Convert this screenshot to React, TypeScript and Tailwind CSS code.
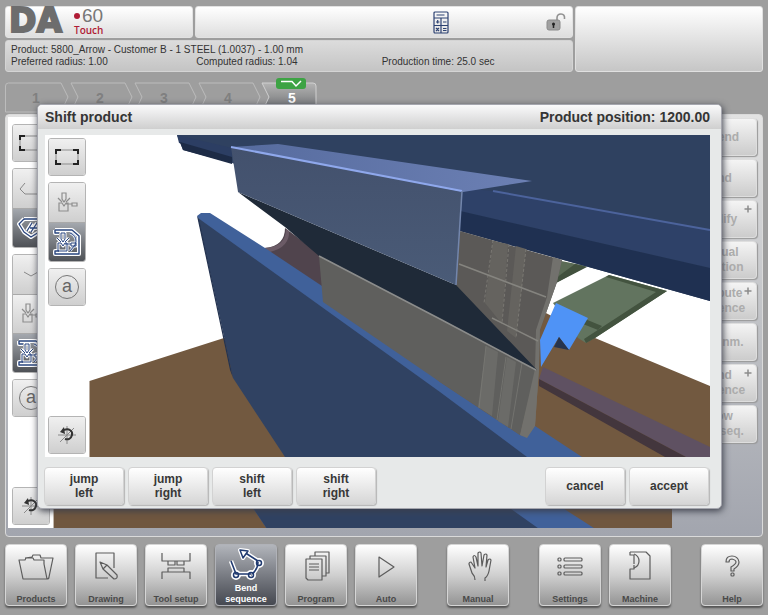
import type { ReactNode } from "react";

const toolLight = "bg-linear-to-b from-[#f0f0f0] to-[#cfcfcf]";
const toolDark = "bg-linear-to-b from-[#a4a8ae] to-[#4f5257]";

type Tool = { label: string; icon: ReactNode; active?: boolean };

function ToolGroup({ tools }: { tools: Tool[] }) {
  return (
    <div className="overflow-hidden rounded-[3px] border border-[#b4b4b4]">
      {tools.map((t, i) => (
        <button
          key={t.label}
          type="button"
          aria-label={t.label}
          aria-pressed={t.active}
          className={`flex w-9 items-center justify-center ${tools.length > 1 ? "h-[39px]" : "h-9"} ${t.active ? toolDark : toolLight} ${i > 0 ? "border-t border-[#a9a9a9]" : ""}`}
        >
          {t.icon}
        </button>
      ))}
    </div>
  );
}

function FrameIcon() {
  return (
    <svg width="26" height="20" viewBox="0 0 26 20" fill="none">
      <path d="M2 5v10M24 5v10M6 3h14M6 17h14" stroke="#8b8b8b" />
      <path d="M2 7V3h5M19 3h5v4M24 13v4h-5M7 17H2v-4" stroke="#222" strokeWidth="2" />
    </svg>
  );
}

const benderPath = "M5 2h4v6l-2 3-2-3zM1 7l4 4M13 7l-4 4M2 12h3l2 3 2-3h2v8H2zM9 13h6M15 12h5v3h-5z";

function BenderIcon() {
  return (
    <svg width="24" height="24" viewBox="0 0 24 24" fill="none" stroke="#8e8e8e" strokeWidth="1.200">
      <path d="M7 2h4v6l-2 3-2-3zM3 7l4 4M15 7l-4 4M4 12h3l2 3 2-3h2v8H4zM11 13h6M17 12h5v3h-5z" />
    </svg>
  );
}

function MachineSideIcon() {
  return (
    <svg width="28" height="28" viewBox="0 0 28 28" fill="none" strokeLinejoin="round">
      <path d="M2 2h17l7 6v18H2v-3h4M2 2v3h4" stroke="#fff" strokeWidth="4" />
      <g transform="translate(3 3)">
        <path d={benderPath} stroke="#fff" strokeWidth="3" />
      </g>
      <path d="M2 2h17l7 6v18H2v-3h4M2 2v3h4" stroke="#29457f" strokeWidth="1.400" />
      <path d="M17 5c6 2 7 8 5 12l-5 6" stroke="#dfe6f5" strokeWidth="2.600" />
      <path d="M17 5c6 2 7 8 5 12l-5 6" stroke="#29457f" />
      <g transform="translate(3 3)">
        <path d={benderPath} stroke="#29457f" />
      </g>
    </svg>
  );
}

function AutoIcon() {
  return (
    <span className="flex h-6 w-6 items-center justify-center rounded-full border border-[#777] pb-0.5 text-lg leading-5 text-[#666]">
      a
    </span>
  );
}

function RotateIcon() {
  return (
    <svg width="22" height="22" viewBox="0 0 22 22" fill="none">
      <path d="M2 11h18M11 2v18M4 18L18 4" stroke="#8a8a8a" />
      <path d="M8 6c5-2 9 1 8 5-1 4-4 5-7 4" stroke="#333" strokeWidth="2" />
      <path d="M8 3L4 8l5 2z" fill="#333" />
    </svg>
  );
}

function BackIcon() {
  return (
    <svg width="26" height="20" viewBox="0 0 26 20" fill="none" stroke="#888">
      <path d="M7 4L2 10l5 5h18" />
    </svg>
  );
}

function BendSideIcon() {
  return (
    <svg width="28" height="24" viewBox="0 0 28 24" fill="none" strokeLinejoin="round">
      <path d="M7 3L2 8l5 8 7 5 8-5M7 3h16M15 7l-5 8M20 7l-6 9M13 12h10" stroke="#fff" strokeWidth="4" />
      <path d="M7 3L2 8l5 8 7 5 8-5M7 3h16M15 7l-5 8M20 7l-6 9M13 12h10" stroke="#29457f" strokeWidth="1.300" />
    </svg>
  );
}

function DownIcon() {
  return (
    <svg width="16" height="10" viewBox="0 0 16 10" fill="none" stroke="#888">
      <path d="M1 2l7 4 7-4" />
    </svg>
  );
}

function Scene() {
  return (
    <svg
      className="absolute inset-0 h-full w-full"
      viewBox="45 135 665 322"
      preserveAspectRatio="xMidYMid slice"
      role="img"
      aria-label="Press brake with product"
    >
      <defs>
        <linearGradient id="sheet" x1="0" x2="1" y1="0" y2="0">
          <stop offset="0" stopColor="#566b9e" />
          <stop offset="1" stopColor="#6c80b4" />
        </linearGradient>
        <linearGradient id="front" x1="0" x2="0" y1="0" y2="1">
          <stop offset="0" stopColor="#43516d" />
          <stop offset="1" stopColor="#4a5b77" />
        </linearGradient>
      </defs>
      <rect x="45" y="135" width="665" height="322" fill="#fff" />
      <path d="M89.500 381L224 338L400 330L540 310L595 338L710 386V457H89.500z" fill="#725940" />
      <path d="M543 367L710 447V457H686L539 379z" fill="#5f5162" />
      <path d="M539 379L686 457H665L539 386z" fill="#43363d" />
      <path d="M556 260L587 266L556 283z" fill="#5b6b56" />
      <path d="M575 264L587 267L556 283V278z" fill="#42513e" />
      <path d="M553 303L609 275L667 291L595 338L586 343L578 338z" fill="#62745f" />
      <path d="M609 275L667 291L595 338L586 343L584 339L656 292L606 277z" fill="#43533f" />
      <path d="M585 319L602 326L598 330L583 324z" fill="#43533f" />
      <path d="M285 228L322 256V296L265 250V248Q285 246 285 228z" fill="#50444d" />
      <path d="M286 229Q286 247 264 248L270 252Q290 247 289 231z" fill="#6b5b66" />
      <path d="M177 135H710V301L460 231L232 163L183 150z" fill="#2f4160" />
      <path d="M177 135L232 148V158L179 143z" fill="#2c3e63" />
      <path d="M180 142L232 157V164L183 150z" fill="#1d2b46" />
      <path d="M493 191L710 230V268L460 211V188z" fill="#2e4168" />
      <path d="M460 211L710 268V301L460 231z" fill="#1f3051" />
      <path d="M493 191L710 230" stroke="#4c639c" strokeWidth="2" />
      <path d="M460 231L562 260L557 282L540 330L539 368L536 371L450 280z" fill="#5b5957" />
      <path d="M553 257L562 260L557 282L540 330L539 368L535 426L527 438L520 435L535 369L536 330L547 297z" fill="#72716d" />
      <path d="M197 216L201 213H210L265 248L322 286L440 382L520 435L527 437L535 426L582 457H520L380 375L230 270z" fill="#40619a" />
      <path d="M319 256L440 319L536 370L520 435L440 382L323 302z" fill="#5f5f5d" />
      <path d="M535 369L520 435L527 438L535 426L539 368z" fill="#72716d" />
      <path d="M486 346L498 352L492 416L478 407zM507 357L516 362L508 427L498 421z" fill="#6b6b68" />
      <path d="M493 241L508 244L502 324L485 303zM516 246L526 249L516 338L507 331z" fill="#65635f" />
      <path d="M493 240L484 303M509 244L502 324M526 249L516 338" stroke="#8d8b84" strokeDasharray="3 2" opacity=".6" />
      <path d="M486 346L479 408M506 357L497 420M522 363L511 429" stroke="#7c7c77" opacity=".7" />
      <path d="M459 264L546 297M492 318L538 341" fill="none" stroke="#85847f" strokeWidth="1.500" />
      <path d="M198 218L440 392L527 457H285L233 378z" fill="#304262" />
      <path d="M197 216L199 219L233 378L230 370z" fill="#243350" />
      <path d="M238 192L456 285L537 370L440 319L319 256L285 227z" fill="#1f2a38" />
      <path d="M319 256L440 319L536 370" fill="none" stroke="#8b8c8b" strokeWidth="1.500" />
      <path d="M231 147L278 144L532 181L463 192z" fill="url(#sheet)" />
      <path d="M231 147L462 192L456 285L238 192z" fill="url(#front)" />
      <path d="M231 147L462 191" stroke="#8fa8ec" strokeWidth="2" />
      <path d="M462 191L456 285" stroke="#7386ac" strokeWidth="1.500" />
      <path d="M556 303L588 318L569 350L559 337L541 367L540 340z" fill="#4f93f6" />
      <path d="M559 337L569 350L554 347z" fill="#26344e" />
    </svg>
  );
}

function BackScene() {
  return (
    <svg
      className="absolute inset-0 h-full w-full"
      viewBox="8 117 663 411"
      preserveAspectRatio="xMidYMax slice"
      aria-hidden="true"
    >
      <rect x="8" y="117" width="663" height="411" fill="#fff" />
      <path d="M53.500 440L200 390L671 420V528H53.500z" fill="#70573f" />
      <path d="M160 250L593 528H266L200 430z" fill="#40619a" />
      <path d="M160 260L537 528H266L200 430z" fill="#304262" />
    </svg>
  );
}

function Steps() {
  return (
    <ol className="relative flex h-8 w-[312px] text-center text-sm font-bold text-[#808080]">
      <svg className="absolute inset-0" width="312" height="32" viewBox="0 0 312 32" fill="none" stroke="#bcbcbc" aria-hidden="true">
        <defs>
          <linearGradient id="tab" x1="0" x2="0" y1="0" y2="1">
            <stop offset="0" stopColor="#b4b4b4" />
            <stop offset="1" stopColor="#6c6e70" />
          </linearGradient>
        </defs>
        <path d="M.5 30V4q0-3 3-3H56l7 14-7 15z" />
        <path d="M66 1h54l7 14-7 15H66l7-15zM130 1h54l7 14-7 15h-54l7-15zM194 1h54l7 14-7 15h-54l7-15z" />
        <path d="M257 1h51q3 0 3 3v26h-54l7-15z" fill="url(#tab)" stroke="#d0d0d0" />
      </svg>
      {["1", "2", "3", "4", "5"].map((n) => (
        <li key={n} className="relative w-16 shrink-0">
          <button type="button" className={`w-full pt-1.5 pr-0.5 ${n === "5" ? "text-white" : ""}`}>
            {n}
          </button>
        </li>
      ))}
      <li className="absolute -top-1 right-[11px] rounded-[3px] bg-[#3da344]" aria-label="Bend marker">
        <svg width="30" height="11" viewBox="0 0 30 11" fill="none" stroke="#fff" strokeWidth="1.500">
          <path d="M5 3.500h11l4 4.500 5-5" />
        </svg>
      </li>
    </ol>
  );
}

const sideButtons = [
  { lines: ["unbend"] },
  { lines: ["bend"] },
  { lines: ["modify"], plus: true },
  { lines: ["manual", "selection"] },
  { lines: ["compute", "sequence"], plus: true },
  { lines: ["assignm."] },
  { lines: ["bend", "sequence"], plus: true },
  { lines: ["show", "bendseq."] },
];

function DialogButton({ lines }: { lines: string[] }) {
  return (
    <button
      type="button"
      className="flex h-[38px] w-20 flex-col items-center justify-center rounded-[4px] border border-[#d2d2d2] bg-linear-to-b from-white to-[#d6d6d6] text-xs leading-[14px] font-bold text-[#383838] shadow-[1px_1px_1px_#b5b5b5]"
    >
      {lines.map((l) => (
        <span key={l}>{l}</span>
      ))}
    </button>
  );
}

function NavIcon({ children }: { children: ReactNode }) {
  return (
    <svg className="shrink-0" width="36" height="36" viewBox="0 0 36 36" fill="none" stroke="#5c5c5c" strokeWidth="1.200" strokeLinejoin="round">
      {children}
    </svg>
  );
}

function NavButton({ label, active, children }: { label: string; active?: boolean; children: ReactNode }) {
  return (
    <button
      type="button"
      aria-current={active ? "page" : undefined}
      className={`flex h-[62px] w-[62px] flex-col items-center justify-between rounded-[4px] border text-[9px] leading-[11px] font-bold shadow-[0_2px_2px_#555] ${
        active
          ? "border-[#b0b2b8] bg-linear-to-b from-[#b2b5bb] to-[#464951] pt-0.5 text-white"
          : "border-[#d5d5d5] bg-linear-to-b from-white via-[#d0d0d0] to-[#949494] pt-1 text-[#494949]"
      }`}
    >
      {children}
      <span className={active ? "w-12" : ""}>{label}</span>
    </button>
  );
}

const bendPath = "M3 14l5 13h15M24 27q6-5 6-12M30 14L16 5";

export default function App() {
  return (
    <div
      className="flex min-h-screen flex-col bg-[#9e9e9e] px-[5px] pt-1.5 pb-[9px] text-[#454545]"
      style={{ fontFamily: '"Liberation Sans", Arial, sans-serif' }}
    >
      <header className="flex gap-0.5">
        <div className="flex flex-1 flex-col gap-0.5">
          <div className="flex gap-0.5">
            <div className="flex h-8 w-[188px] gap-0.5 rounded-[3px] border border-[#e2e2e2] bg-linear-to-b from-white to-[#dedede] pl-0.5">
              <svg className="overflow-visible" width="64" height="30" viewBox="0 0 64 30" aria-label="DA">
                <text x="1" y="25" fontFamily="DejaVu Sans" fontWeight="700" fontSize="33" fill="#6d6d6d" stroke="#6d6d6d" strokeWidth="2">
                  DA
                </text>
              </svg>
              <div className="flex flex-col">
                <div className="flex h-[17px] items-center gap-0.5 text-[19px] leading-[17px] text-[#777]">
                  <span className="h-1.5 w-1.5 rounded-full bg-[#b01c36]" />
                  60
                </div>
                <span className="font-['Open_Sans',sans-serif] text-[10px] leading-3 font-semibold text-[#b01c36]">Touch</span>
              </div>
            </div>
            <div className="grid h-8 flex-1 grid-cols-[1fr_auto_1fr] items-center rounded-[3px] border border-[#e2e2e2] bg-linear-to-b from-white to-[#dedede] pr-1.5 pl-[120px]">
              <span />
              <button type="button" aria-label="Calculator">
                <svg width="16" height="23" viewBox="0 0 16 23" fill="none" stroke="#2d4272" strokeWidth="1.200">
                  <rect x="1" y="1" width="14" height="21" rx="1" />
                  <path d="M1 7h14M1 14.500h14M8 7v15M3.500 4h8M3 11h3.500M4.700 9v3.500M10 11h3.500M3 17l3 3M6 17l-3 3M10 17.500h3.500M10 19.500h3.500" />
                </svg>
              </button>
              <button type="button" aria-label="Unlock" className="justify-self-end">
                <svg width="20" height="20" viewBox="0 0 20 20" fill="none">
                  <path d="M11 9V6q0-4 4-4t3.500 5" stroke="#929292" strokeWidth="1.600" />
                  <rect x="1" y="8" width="13" height="10" rx="2" fill="#a0a0a0" stroke="#8a8a8a" />
                  <circle cx="7.500" cy="12" r="1.500" fill="#222" />
                  <path d="M7.500 12v4" stroke="#222" strokeWidth="1.500" />
                </svg>
              </button>
            </div>
          </div>
          <div className="h-8 rounded-[3px] border border-[#d4d4d4] bg-linear-to-b from-[#dcdcdc] to-[#c4c4c4] px-[5px] pt-[3px] text-[10px] leading-3 text-[#333]">
            <p>Product: 5800_Arrow - Customer B - 1 STEEL (1.0037) - 1.00 mm</p>
            <div className="grid grid-cols-3">
              <p>Preferred radius: 1.00</p>
              <p>Computed radius: 1.04</p>
              <p>Production time: 25.0 sec</p>
            </div>
          </div>
        </div>
        <div className="w-[188px] rounded-[3px] border border-[#e0e0e0] bg-linear-to-b from-white to-[#c6c6c6]" />
      </header>

      <div className="relative mt-2.5 flex min-h-[455px] flex-1 flex-col">
        <Steps />
        <main className="flex flex-1 justify-between rounded-[4px] border border-[#dadada] bg-linear-to-b from-[#e2e2e2] via-[#c0c2c6] to-[#a2a5ae] p-0.5">
          <div className="relative mb-1.5 flex-1">
            <BackScene />
            <div className="relative flex h-full flex-col items-start gap-1.5 px-1 pt-[7px] pb-[3px]">
              <ToolGroup tools={[{ label: "Fit view", icon: <FrameIcon /> }]} />
              <ToolGroup
                tools={[
                  { label: "Back", icon: <BackIcon /> },
                  { label: "Bend view", icon: <BendSideIcon />, active: true },
                ]}
              />
              <ToolGroup
                tools={[
                  { label: "Collapse", icon: <DownIcon /> },
                  { label: "Tool view", icon: <BenderIcon /> },
                  { label: "Machine view", icon: <MachineSideIcon />, active: true },
                ]}
              />
              <ToolGroup tools={[{ label: "Automatic", icon: <AutoIcon /> }]} />
              <div className="mt-auto">
                <ToolGroup tools={[{ label: "Rotate", icon: <RotateIcon /> }]} />
              </div>
            </div>
          </div>
          <div className="ml-1.5 flex w-[82px] flex-col gap-[3px] pt-px pr-[3px]">
            {sideButtons.map((b) => (
              <button
                key={b.lines.join(" ")}
                type="button"
                className="relative flex h-[38px] flex-col items-center justify-center rounded-[4px] border border-[#dedede] bg-linear-to-b from-[#f4f4f4] to-[#cccccc] text-xs leading-[15px] font-bold text-[#acacac] shadow-[1px_1px_1px_#999]"
              >
                {b.lines.map((l) => (
                  <span key={l}>{l}</span>
                ))}
                {b.plus && (
                  <svg className="absolute top-1 right-1" width="8" height="8" viewBox="0 0 8 8" stroke="#8c8c8c" strokeWidth="1.500" aria-hidden="true">
                    <path d="M4 .5v7M.5 4h7" />
                  </svg>
                )}
              </button>
            ))}
          </div>
        </main>

        <section
          role="dialog"
          aria-label="Shift product"
          className="absolute top-[22px] right-[41px] bottom-7 left-8 flex flex-col rounded-[5px] border border-[#a5a6ae] bg-[#e7e9e9] shadow-[1px_2px_7px_#3c3f4a]"
        >
          <div className="flex h-6 items-center justify-between rounded-t-[4px] bg-linear-to-b from-[#fafafb] to-[#cfcfcf] pr-[11px] pl-[7px] text-sm font-bold text-[#353535]">
            <h1>Shift product</h1>
            <p>Product position: 1200.00</p>
          </div>
          <div className="relative mt-1.5 mr-[11px] ml-[7px] flex flex-1 flex-col items-start p-[3px]">
            <Scene />
            <div className="relative flex flex-1 flex-col gap-1.5">
              <ToolGroup tools={[{ label: "Fit product", icon: <FrameIcon /> }]} />
              <ToolGroup
                tools={[
                  { label: "Product tools", icon: <BenderIcon /> },
                  { label: "Product machine", icon: <MachineSideIcon />, active: true },
                ]}
              />
              <ToolGroup tools={[{ label: "Product automatic", icon: <AutoIcon /> }]} />
              <div className="mt-auto">
                <ToolGroup tools={[{ label: "Rotate product", icon: <RotateIcon /> }]} />
              </div>
            </div>
          </div>
          <div className="flex justify-between pt-2.5 pr-3 pb-[3px] pl-1.5">
            <div className="flex gap-1">
              <DialogButton lines={["jump", "left"]} />
              <DialogButton lines={["jump", "right"]} />
              <DialogButton lines={["shift", "left"]} />
              <DialogButton lines={["shift", "right"]} />
            </div>
            <div className="flex gap-1">
              <DialogButton lines={["cancel"]} />
              <DialogButton lines={["accept"]} />
            </div>
          </div>
        </section>
      </div>

      <nav className="mt-[7px] flex justify-between">
        <div className="flex gap-2">
          <NavButton label="Products">
            <NavIcon>
              <path d="M5 30L1 11h6l1-2h7l1 2h10v4l3 15zM29 30q2 0 2-2l4-19H23l-1-3h-7l-1 2-7 1" />
            </NavIcon>
          </NavButton>
          <NavButton label="Drawing">
            <NavIcon>
              <path d="M20 29H8V4h18v15" />
              <path d="M12 13l7 3 10 10q1 4-3 4L15 20zM15 20l4-4" />
            </NavIcon>
          </NavButton>
          <NavButton label="Tool setup">
            <NavIcon>
              <path d="M4 4v8h28V4M10 12v4h7v-4M19 12v4h7v-4M4 30v-7h28v7M10 23v-4h16v4" />
            </NavIcon>
          </NavButton>
          <NavButton label="Bend sequence" active>
            <NavIcon>
              <path d={bendPath} stroke="#fff" strokeWidth="4.500" />
              <path d="M12 3l8 1-5 7z" fill="#fff" stroke="#fff" strokeWidth="4" />
              <g stroke="#fff" strokeWidth="4">
                <circle cx="8" cy="28" r="3" />
                <circle cx="23" cy="28" r="3" />
                <circle cx="31" cy="16" r="3" />
              </g>
              <path d={bendPath} stroke="#203a70" strokeWidth="1.600" />
              <path d="M12 3l8 1-5 7z" fill="#fff" stroke="#203a70" strokeWidth="1.500" />
              <g stroke="#203a70" strokeWidth="1.500">
                <circle cx="8" cy="28" r="2.500" />
                <circle cx="23" cy="28" r="2.500" />
                <circle cx="31" cy="16" r="2.500" />
              </g>
            </NavIcon>
          </NavButton>
          <NavButton label="Program">
            <NavIcon>
              <path d="M8 10h16v21H10l-2-2zM12 10V7h16v20h-4M17 7V3h14v21h-3" />
              <path d="M11 15h10M11 18h10M11 21h10" />
            </NavIcon>
          </NavButton>
          <NavButton label="Auto">
            <NavIcon>
              <path d="M11 8l15 10-15 10z" />
            </NavIcon>
          </NavButton>
        </div>
        <NavButton label="Manual">
          <NavIcon>
            <path d="M15 31q0-4-3-7L9 15q0-2 2-2l4 6-2-11q1-3 3 0l2 9 0-13q2-2 3 0l1 13 2-11q2-2 3 0l-1 12 2-7q2-2 3 0l-2 11q-1 5-4 7v3" />
          </NavIcon>
        </NavButton>
        <div className="flex gap-2">
          <NavButton label="Settings">
            <NavIcon>
              <rect x="6" y="9" width="3" height="3" rx="1" />
              <rect x="6" y="16" width="3" height="3" rx="1" />
              <rect x="6" y="23" width="3" height="3" rx="1" />
              <rect x="12" y="9" width="18" height="3" rx="1" />
              <rect x="12" y="16" width="18" height="3" rx="1" />
              <rect x="12" y="23" width="18" height="3" rx="1" />
            </NavIcon>
          </NavButton>
          <NavButton label="Machine">
            <NavIcon>
              <path d="M8 3h16l4 4v23H8V20h4v-4M8 3v3h4v9" />
              <path d="M12 5q5 2 5 7t-5 7" />
            </NavIcon>
          </NavButton>
        </div>
        <NavButton label="Help">
          <NavIcon>
            <path d="M12 13q0-6 6-6t7 6q0 4-5 7v2h-3v-4q5-3 5-5t-4-3q-3 0-3 3z" />
            <rect x="17" y="24" width="3" height="3" rx="1" />
          </NavIcon>
        </NavButton>
      </nav>
    </div>
  );
}
